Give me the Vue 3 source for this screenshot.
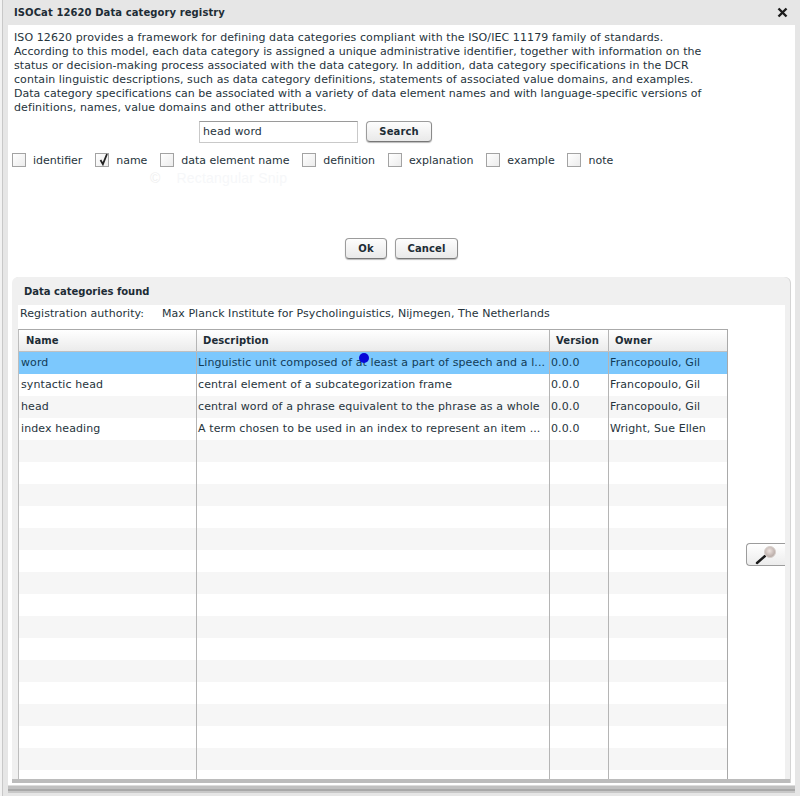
<script setup>
const lines = [
  { text: 'ISO 12620 provides a framework for defining data categories compliant with the ISO/IEC 11179 family of standards.', ls: 0.09 },
  { text: 'According to this model, each data category is assigned a unique administrative identifier, together with information on the', ls: 0.033 },
  { text: 'status or decision-making process associated with the data category. In addition, data category specifications in the DCR', ls: 0.057 },
  { text: 'contain linguistic descriptions, such as data category definitions, statements of associated value domains, and examples.', ls: 0.065 },
  { text: 'Data category specifications can be associated with a variety of data element names and with language-specific versions of', ls: 0.017 },
  { text: 'definitions, names, value domains and other attributes.', ls: 0.11 },
]
const fields = [
  { label: 'identifier', checked: false },
  { label: 'name', checked: true },
  { label: 'data element name', checked: false },
  { label: 'definition', checked: false },
  { label: 'explanation', checked: false },
  { label: 'example', checked: false },
  { label: 'note', checked: false },
]
const data = [
  ['word', 'Linguistic unit composed of at least a part of speech and a l...', '0.0.0', 'Francopoulo, Gil'],
  ['syntactic head', 'central element of a subcategorization frame', '0.0.0', 'Francopoulo, Gil'],
  ['head', 'central word of a phrase equivalent to the phrase as a whole', '0.0.0', 'Francopoulo, Gil'],
  ['index heading', 'A term chosen to be used in an index to represent an item ...', '0.0.0', 'Wright, Sue Ellen'],
]
const rows = Array.from({ length: 20 }, (_, i) => data[i] || ['', '', '', ''])
</script>

<template>
  <div class="dialog">
    <header class="title">
      <span>ISOCat 12620 Data category registry</span>
      <svg class="close" width="11" height="11" viewBox="0 0 11 11"><path d="M1.5 1.5l8 8M9.5 1.5l-8 8" stroke="#1c1c1c" stroke-width="2.4" fill="none"/></svg>
    </header>
    <main class="body">
      <div class="intro">
        <div v-for="l in lines" :key="l.text" :style="{ letterSpacing: l.ls + 'px' }">{{ l.text }}</div>
      </div>
      <div class="search">
        <div class="input">head word</div>
        <button class="btn search-btn">Search</button>
      </div>
      <div class="checks">
        <label v-for="f in fields" :key="f.label" class="check">
          <span class="box">
            <svg v-if="f.checked" width="14" height="14" viewBox="0 0 14 14"><path d="M5.5 7l2.4 4.2L12 1" stroke="#222" stroke-width="1.8" fill="none"/></svg>
          </span>
          <span>{{ f.label }}</span>
        </label>
      </div>
      <div class="ghost"><span class="ghost-dot">©</span><span>Rectangular Snip</span></div>
      <div class="actions">
        <button class="btn action">Ok</button>
        <button class="btn action cancel">Cancel</button>
      </div>
      <section class="panel">
        <h2 class="panel-title">Data categories found</h2>
        <div class="panel-body">
          <div class="authority"><span class="auth-label">Registration authority:</span><span>Max Planck Institute for Psycholinguistics, Nijmegen, The Netherlands</span></div>
          <div class="grid-wrap">
            <div class="grid">
              <div class="row head-row">
                <div class="cell">Name</div><div class="cell">Description</div><div class="cell">Version</div><div class="cell">Owner</div>
              </div>
              <div v-for="(r, i) in rows" :key="i" class="row" :class="{ selected: i === 0, alt: i % 2 === 0 && i > 0 }">
                <div v-for="(c, j) in r" :key="j" class="cell">{{ c }}</div>
              </div>
              <span class="pointer"></span>
            </div>
            <button class="zoom-btn" aria-label="Inspect">
              <svg width="26" height="20" viewBox="0 0 26 20"><defs><radialGradient id="lens" cx="0.45" cy="0.4" r="0.6"><stop offset="0" stop-color="#efe4e0"/><stop offset="1" stop-color="#b3a6a2"/></radialGradient></defs><path d="M4 18l8-7" stroke="#1b1b1b" stroke-width="2.4" stroke-linecap="round"/><circle cx="17" cy="7" r="5.5" fill="url(#lens)" stroke="#d8d0cc"/></svg>
            </button>
          </div>
        </div>
      </section>
    </main>
  </div>
</template>

<style>
html, body { margin: 0; background: #e6e6e6; overflow: hidden; }
</style>

<style scoped>
.dialog {
  width: 800px;
  height: 796px;
  box-sizing: border-box;
  position: relative;
  overflow: hidden;
  background: linear-gradient(90deg, #f2f2f2 0 2px, #c8c8c8 2px 3px, #e6e6e6 3px);
  padding: 0 5px 11px 8px;
  font-family: "DejaVu Sans", Verdana, sans-serif;
  font-size: 11px;
  color: #26343c;
  display: flex;
  flex-direction: column;
}
.title {
  height: 25px;
  flex: none;
  margin: 0 0 0 -8px;
  padding: 0 7px 0 14px;
  display: flex;
  align-items: center;
  justify-content: space-between;
  font-weight: 700;
  font-size: 10px;
  letter-spacing: .09px;
  color: #1d2c35;
}
.body {
  flex: 1;
  min-height: 0;
  background: #fff;
  display: flex;
  flex-direction: column;
  position: relative;
  padding: 0 5px 2px 4px;
  box-shadow: 0 1px 0 #ddd, 0 4px 0 #c0c0c0, 0 6px 0 #a8a8a8, 0 8px 0 #c8c8c8;
}
.intro {
  padding: 6px 0 0 2px;
  line-height: 14px;
  white-space: nowrap;
}
.search {
  display: flex;
  gap: 8px;
  margin: 6px 0 0 187px;
  height: 22px;
}
.input {
  width: 159px;
  height: 22px;
  box-sizing: border-box;
  border: 1px solid #c9c9c9;
  border-top-color: #9a9a9a;
  padding-left: 3px;
  line-height: 19px;
  letter-spacing: .1px;
}
.btn {
  font: 700 10px "DejaVu Sans", Verdana, sans-serif;
  letter-spacing: .1px;
  color: #1d2c35;
  background: linear-gradient(#fdfdfd, #e9e9e9);
  border: 1px solid #9c9c9c;
  border-right-color: #8a8a8a;
  border-bottom-color: #777;
  border-radius: 4px;
  padding: 0;
  box-shadow: 0 1px 1px #bbb;
}
.search-btn { width: 66px; height: 21px; }
.checks {
  display: flex;
  margin: 10px 0 0 0;
  height: 14px;
  gap: 12.8px;
}
.check {
  display: flex;
  align-items: center;
  gap: 7px;
}
.box {
  width: 14px;
  height: 14px;
  box-sizing: border-box;
  border: 1px solid #a3a3a3;
  background: linear-gradient(135deg, #ffffff, #ececec);
  display: flex;
  align-items: center;
  justify-content: center;
}
.box svg { flex: none; }
.ghost {
  position: absolute;
  left: 142px;
  top: 145px;
  display: flex;
  gap: 16px;
  color: #f6f7f9;
  font: 14px "Liberation Sans", sans-serif;
  letter-spacing: .2px;
}
.ghost-dot { color: #efefef; }
.actions {
  display: flex;
  gap: 8px;
  margin: 71px 0 0 333px;
  height: 22px;
}
.action { width: 42px; height: 21px; }
.cancel { width: 63px; }
.panel {
  margin: 17px 0 0 0;
  flex: 1;
  min-height: 0;
  background: #f0f0f0;
  border-radius: 6px 6px 0 0;
  padding: 0 5px 0 6px;
  display: flex;
  flex-direction: column;
  border-bottom: 4px solid #bcbcbc;
  box-shadow: 1px 0 0 #d4d4d4;
}
.panel-title {
  margin: 0;
  height: 28px;
  line-height: 29px;
  font-size: 10px;
  padding-left: 6px;
  color: #1d2c35;
  flex: none;
}
.panel-body {
  flex: 1;
  min-height: 0;
  background: #fff;
  display: flex;
  flex-direction: column;
}
.authority {
  height: 24px;
  flex: none;
  display: flex;
  align-items: flex-start;
  line-height: 17px;
  padding-left: 2px;
  letter-spacing: .05px;
}
.auth-label { width: 142px; }
.grid-wrap {
  display: flex;
  flex: 1;
  min-height: 0;
  position: relative;
}
.grid {
  width: 710px;
  flex: none;
  box-sizing: border-box;
  border-right: 1px solid #a9a9a9;
  border-left: 1px solid #bdbdbd;
  border-top: 1px solid #aaa;
  position: relative;
  overflow: hidden;
}
.row {
  display: grid;
  grid-template-columns: 178px 353px 59px 1fr;
  height: 22px;
  line-height: 21px;
  letter-spacing: .1px;
}
.cell {
  padding-left: 1px;
  white-space: nowrap;
  overflow: hidden;
  border-right: 1px solid #b5b5b5;
  box-sizing: border-box;
}
.cell:first-child { padding-left: 2px; }
.cell:last-child { border-right: 0; }
.head-row {
  background: linear-gradient(#ffffff, #ebebeb);
  border-bottom: 1px solid #c0c0c0;
  box-sizing: border-box;
  font-weight: 700;
  font-size: 10px;
  color: #1d2c35;
}
.head-row .cell { padding-left: 6px; }
.head-row .cell:first-child { padding-left: 7px; }
.selected { background: #7cc8fd; color: #123c58; }
.alt { background: #f6f6f6; }
.pointer {
  position: absolute;
  left: 340px;
  top: 23px;
  width: 10px;
  height: 10px;
  border-radius: 50%;
  background: #0808d8;
}
.zoom-btn {
  position: absolute;
  left: 728px;
  top: 214px;
  width: 39px;
  height: 23px;
  padding: 0;
  border: 1px solid #9c9c9c;
  border-right: 0;
  border-radius: 4px 0 0 4px;
  background: linear-gradient(#fff, #ececec);
  display: flex;
  align-items: center;
  justify-content: center;
}
.close { flex: none; }
</style>
